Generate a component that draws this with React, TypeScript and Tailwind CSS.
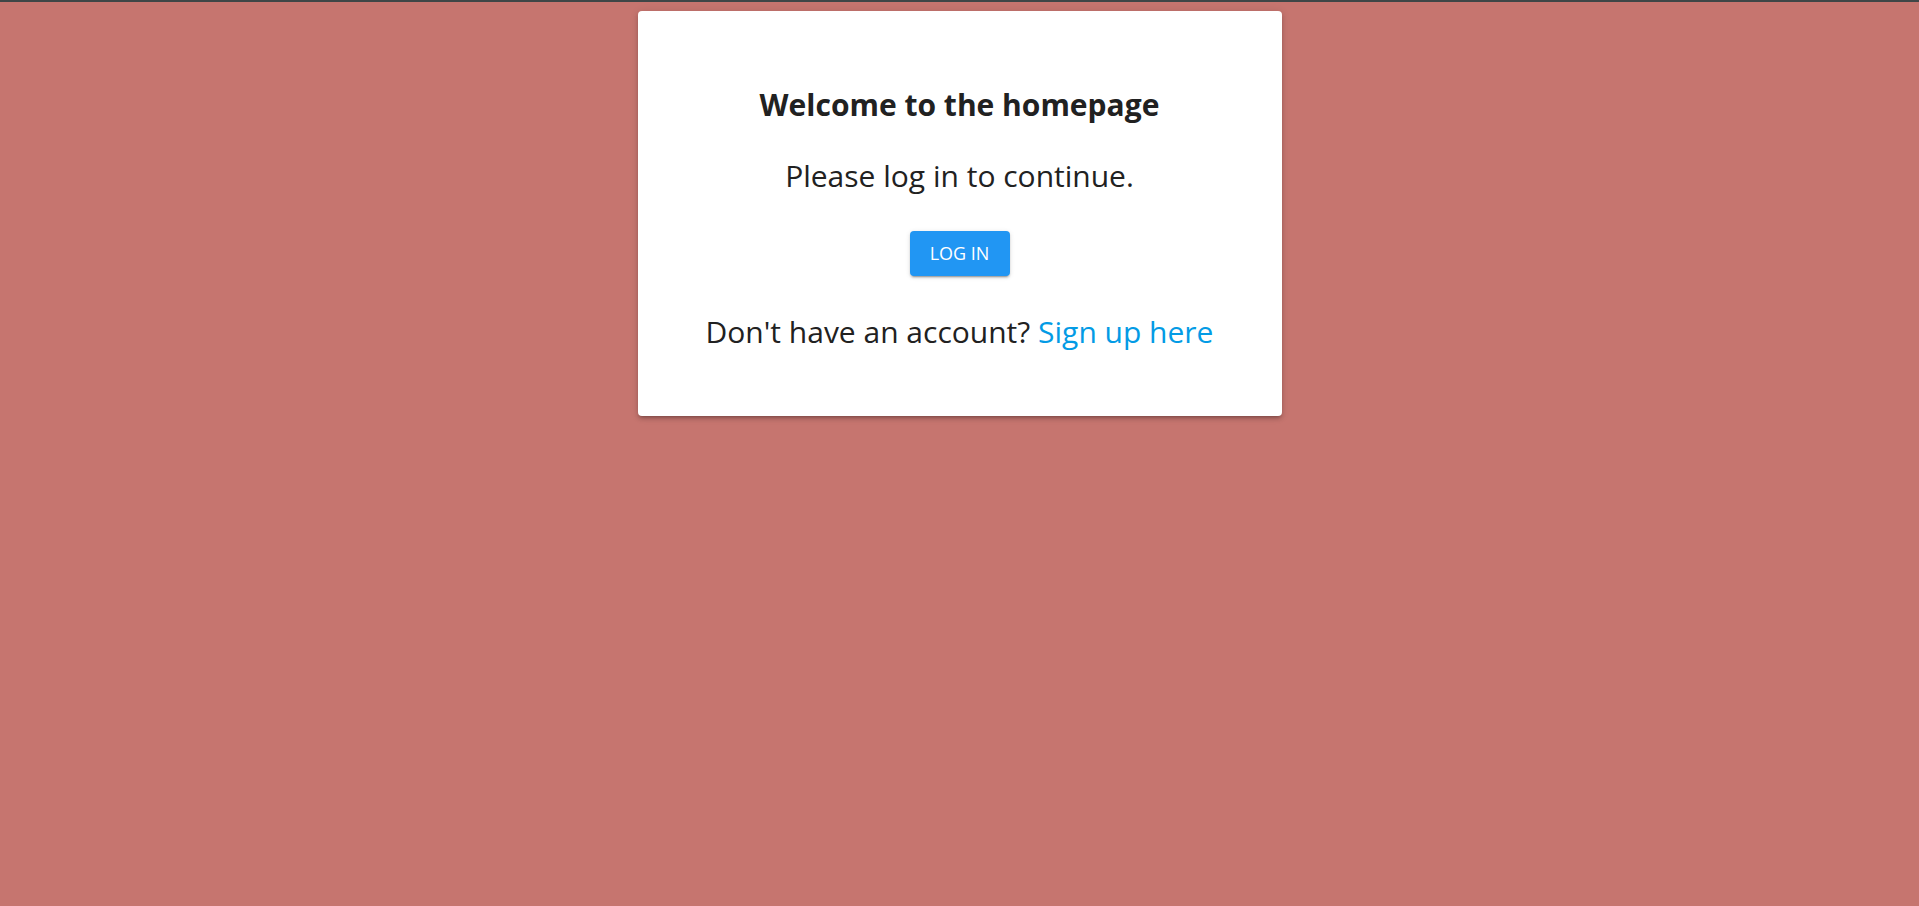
import React from "react";

const App = () => {
  return (
    <div
      className="min-h-screen w-full bg-[#c6756f] border-t-2 border-[#3f4647] text-[#212121]"
      style={{ fontFamily: '"Open Sans", "Noto Sans", sans-serif' }}
    >
      <div className="mx-auto mt-[9px] w-[644px] rounded bg-white pt-[74px] pb-[64px] text-center shadow-[0px_3px_3px_-2px_rgba(0,0,0,0.2),0px_3px_4px_0px_rgba(0,0,0,0.14),0px_1px_8px_0px_rgba(0,0,0,0.12)]">
        <h2 className="text-[30px] font-bold leading-[40px]">
          Welcome to the homepage
        </h2>
        <p className="mt-[31px] text-[30px] leading-[40px]">
          Please log in to continue.
        </p>
        <div className="mt-[35px] flex justify-center">
          <button className="h-[45px] w-[100px] rounded bg-[#2196f3] text-[18px] uppercase text-white shadow-[0px_3px_1px_-2px_rgba(0,0,0,0.2),0px_2px_2px_0px_rgba(0,0,0,0.14),0px_1px_5px_0px_rgba(0,0,0,0.12)]">
            Log in
          </button>
        </div>
        <p className="mt-[36px] text-[30px] leading-[40px]">
          Don't have an account?{" "}
          <a href="#" className="text-[#039be5]">
            Sign up here
          </a>
        </p>
      </div>
    </div>
  );
};

export default App;
